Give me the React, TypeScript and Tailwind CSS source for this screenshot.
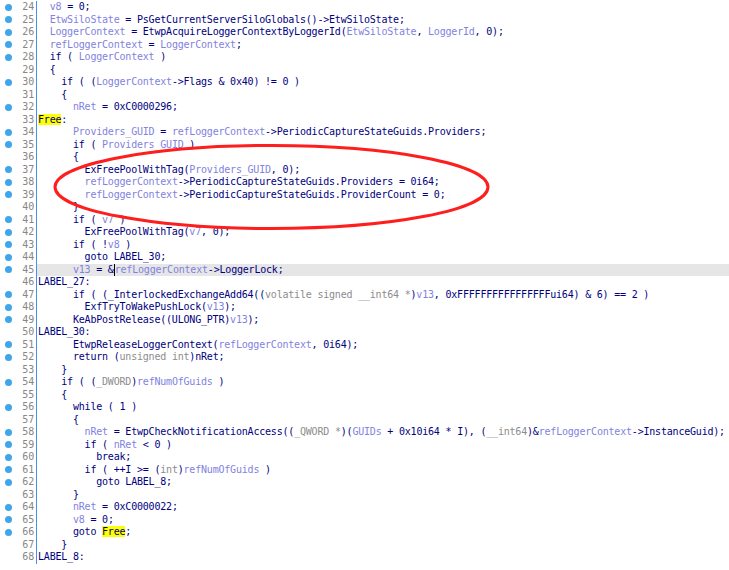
import React from "react";

// markers: @var@  ~type~  %highlight%  | cursor
const lines: [number, string][] = [
  [24, "  @v8@ = 0;"],
  [25, "  @EtwSiloState@ = PsGetCurrentServerSiloGlobals()->EtwSiloState;"],
  [26, "  @LoggerContext@ = EtwpAcquireLoggerContextByLoggerId(@EtwSiloState@, @LoggerId@, 0);"],
  [27, "  @refLoggerContext@ = @LoggerContext@;"],
  [28, "  if ( @LoggerContext@ )"],
  [29, "  {"],
  [30, "    if ( (@LoggerContext@->Flags & 0x40) != 0 )"],
  [31, "    {"],
  [32, "      @nRet@ = 0xC0000296;"],
  [33, "%Free%:"],
  [34, "      @Providers_GUID@ = @refLoggerContext@->PeriodicCaptureStateGuids.Providers;"],
  [35, "      if ( @Providers_GUID@ )"],
  [36, "      {"],
  [37, "        ExFreePoolWithTag(@Providers_GUID@, 0);"],
  [38, "        @refLoggerContext@->PeriodicCaptureStateGuids.Providers = 0i64;"],
  [39, "        @refLoggerContext@->PeriodicCaptureStateGuids.ProviderCount = 0;"],
  [40, "      }"],
  [41, "      if ( @v7@ )"],
  [42, "        ExFreePoolWithTag(@v7@, 0);"],
  [43, "      if ( !@v8@ )"],
  [44, "        goto LABEL_30;"],
  [45, "      @v13@ = &|@refLoggerContext@->LoggerLock;"],
  [46, "LABEL_27:"],
  [47, "      if ( (_InterlockedExchangeAdd64((~volatile signed __int64 *~)@v13@, 0xFFFFFFFFFFFFFFFFui64) & 6) == 2 )"],
  [48, "        ExfTryToWakePushLock(@v13@);"],
  [49, "      KeAbPostRelease((ULONG_PTR)@v13@);"],
  [50, "LABEL_30:"],
  [51, "      EtwpReleaseLoggerContext(@refLoggerContext@, 0i64);"],
  [52, "      return (~unsigned int~)nRet;"],
  [53, "    }"],
  [54, "    if ( (~_DWORD~)@refNumOfGuids@ )"],
  [55, "    {"],
  [56, "      while ( 1 )"],
  [57, "      {"],
  [58, "        @nRet@ = EtwpCheckNotificationAccess((~_QWORD *~)(@GUIDs@ + 0x10i64 * I), (~__int64~)&@refLoggerContext@->InstanceGuid);"],
  [59, "        if ( @nRet@ < 0 )"],
  [60, "          break;"],
  [61, "        if ( ++I >= (~int~)@refNumOfGuids@ )"],
  [62, "          goto LABEL_8;"],
  [63, "      }"],
  [64, "      @nRet@ = 0xC0000022;"],
  [65, "      @v8@ = 0;"],
  [66, "      goto %Free%;"],
  [67, "    }"],
  [68, "LABEL_8:"],
];

const noDot = new Set([29, 31, 33, 36, 40, 46, 50, 53, 55, 57, 63, 67, 68]);

function renderCode(src: string) {
  const parts = src.split(/(@[^@]*@|~[^~]*~|%[^%]*%|\|)/);
  return parts.map((p, i) => {
    if (!p) return null;
    if (p === "|") return <span key={i} className="inline-block w-0 h-[12.5px] align-top border-l border-black" />;
    if (p[0] === "@") return <span key={i} className="text-[#8282e0]">{p.slice(1, -1)}</span>;
    if (p[0] === "~") return <span key={i} className="text-[#8c8c8c]">{p.slice(1, -1)}</span>;
    if (p[0] === "%") return <span key={i} className="bg-[#ffff00]">{p.slice(1, -1)}</span>;
    return <span key={i}>{p}</span>;
  });
}

export default function App() {
  return (
    <div className="relative w-[729px] h-[570px] overflow-hidden bg-white pt-[1px] font-['DejaVu_Sans_Mono',monospace] text-[10px] tracking-[-0.2px] text-[#000080]">
      {lines.map(([n, code]) => (
        <div key={n} className="flex h-[12.5px] leading-[12.5px]">
          <div className="flex items-center w-[37px] shrink-0 border-r border-[#4a90e2] pl-[5px] pr-[2px]">
            <span className={noDot.has(n) ? "w-[7px] h-[7px]" : "w-[7px] h-[7px] rounded-full bg-[#3ea6ea]"} />
            <span className="flex-1 text-right text-[#878787]">{n}</span>
          </div>
          <div className={"flex-1 pl-[1px] whitespace-pre " + (n === 45 ? "bg-[#e6e6e6]" : "")}>
            {renderCode(code)}
          </div>
        </div>
      ))}
      <svg className="absolute inset-0 pointer-events-none" width="729" height="570">
        <ellipse cx="271.5" cy="187" rx="216.5" ry="41.5" fill="none" stroke="#ff1e1e" strokeWidth="3" />
      </svg>
    </div>
  );
}
